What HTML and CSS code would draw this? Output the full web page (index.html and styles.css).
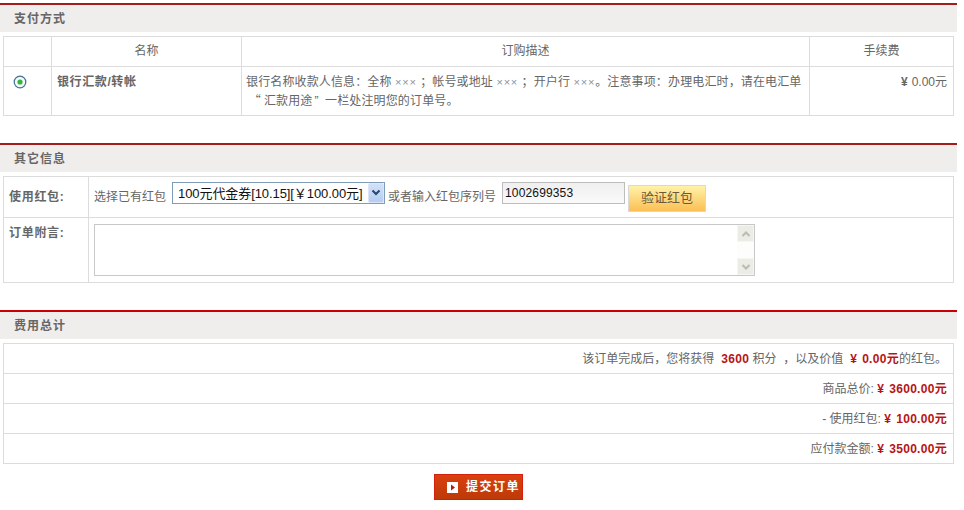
FILE: index.html
```html
<!DOCTYPE html>
<html lang="zh-CN">
<head>
<meta charset="utf-8">
<title>订单结算</title>
<link rel="stylesheet" href="styles.css">
</head>
<body>
<main class="page">
  <section class="block">
    <h2 class="bar bar-dark">支付方式</h2>
    <table class="grid pay">
      <colgroup><col class="c-radio"><col class="c-name"><col class="c-desc"><col class="c-fee"></colgroup>
      <thead>
        <tr><th></th><th>名称</th><th>订购描述</th><th>手续费</th></tr>
      </thead>
      <tbody>
        <tr>
          <td class="radio-cell">
            <svg class="radio" width="14" height="14" viewBox="0 0 14 14"><circle cx="7" cy="7" r="5.800" fill="#f4f7fb" stroke="#3f6f94" stroke-width="1.200"/><circle cx="7" cy="7" r="2.600" fill="#35b53a"/></svg>
          </td>
          <td class="pay-name">银行汇款/转帐</td>
          <td class="pay-desc">银行名称收款人信息：全称 <span class="x">×××</span> ；帐号或地址 <span class="x">×××</span> ；开户行 <span class="x">×××</span>。注意事项：办理电汇时，请在电汇单<br><span class="cjk quote-start">&nbsp;“</span>汇款用途<span class="quote-end">”</span> 一栏处注明您的订单号。</td>
          <td class="pay-fee"><b class="yen">¥</b>0.00元</td>
        </tr>
      </tbody>
    </table>
  </section>

  <section class="block">
    <h2 class="bar bar-dark">其它信息</h2>
    <table class="grid info">
      <colgroup><col class="c-label"><col></colgroup>
      <tbody>
        <tr class="row-bonus">
          <th class="label">使用红包:</th>
          <td>
            <div class="bonus">
              <span>选择已有红包</span>
              <div class="select">
                <span class="select-text">100元代金券[10.15][￥100.00元]</span>
                <span class="select-arrow">
                  <svg width="10" height="8" viewBox="0 0 10 8"><path d="M1.500 1.500 5 5l3.500-3.500" fill="none" stroke="#24466f" stroke-width="2"/></svg>
                </span>
              </div>
              <span class="or">或者输入红包序列号</span>
              <input class="serial" type="text" value="1002699353">
              <button class="verify" type="button">验证红包</button>
            </div>
          </td>
        </tr>
        <tr class="row-note">
          <th class="label">订单附言:</th>
          <td>
            <div class="note">
              <textarea class="note-input"></textarea>
              <div class="scroll">
                <span class="scroll-btn"><svg width="10" height="8" viewBox="0 0 10 8"><path d="M1.500 6 5 2.500 8.500 6" fill="none" stroke="#b9bcb4" stroke-width="2"/></svg></span>
                <span class="scroll-btn"><svg width="10" height="8" viewBox="0 0 10 8"><path d="M1.500 2 5 5.500 8.500 2" fill="none" stroke="#b9bcb4" stroke-width="2"/></svg></span>
              </div>
            </div>
          </td>
        </tr>
      </tbody>
    </table>
  </section>

  <section class="block">
    <h2 class="bar bar-red">费用总计</h2>
    <table class="grid total">
      <tbody>
        <tr><td>该订单完成后<span class="cjk">，</span>您将获得 <b class="price">&nbsp;3600</b> 积分 &nbsp;，以及价值 <b class="price">&nbsp;<span class="yen">¥</span>0.00元</b>的红包。</td></tr>
        <tr><td>商品总价: <b class="price"><span class="yen">¥</span>3600.00元</b></td></tr>
        <tr><td>- 使用红包: <b class="price"><span class="yen">¥</span>100.00元</b></td></tr>
        <tr><td>应付款金额: <b class="price"><span class="yen">¥</span>3500.00元</b></td></tr>
      </tbody>
    </table>
  </section>

  <div class="actions">
    <button class="submit" type="button">
      <svg width="11" height="11" viewBox="0 0 11 11"><rect width="11" height="11" fill="#fff"/><path d="M4 2.500 8 5.500 4 8.500Z" fill="#b01c10"/></svg>
      <span>提交订单</span>
    </button>
  </div>
</main>
</body>
</html>
```
FILE: styles.css
```css
* { box-sizing: border-box; }
html, body { margin: 0; background: #fff; }
body {
  font: 12px/18px "Liberation Sans", "Noto Sans CJK SC", sans-serif;
  color: #666;
}
.page { width: 957px; padding-top: 3px; }
.block { margin-bottom: 27px; }
.block:last-of-type { margin-bottom: 0; }
.cjk { font-family: "Noto Sans CJK SC", sans-serif; }
.quote-start { margin-right: 3px; }
.quote-end { margin: 0 3px 0 2px; }

.bar {
  height: 29px;
  margin: 0;
  padding-left: 14px;
  font-size: 12px;
  line-height: 28px;
  font-weight: 700;
  letter-spacing: 1px;
  color: #666;
  background: #f0eded;
}
.bar-dark { border-top: 2px solid #a31d1d; }
.bar-red { border-top: 2px solid #cc0000; }

.grid {
  width: 951px;
  margin: 4px 0 0 3px;
  border-collapse: collapse;
  table-layout: fixed;
}
.grid th, .grid td { border: 1px solid #dcdcdc; }

.c-radio { width: 48px; }
.c-name { width: 190px; }
.c-fee { width: 144px; }
.pay thead th { height: 30px; font-weight: 400; text-align: center; padding: 0 0 2px; }
.pay tbody td { height: 49px; padding: 6px 6px 0; vertical-align: top; }
.pay .radio-cell { padding: 8px 0 0 9px; }
.radio { display: block; }
.pay .pay-name { padding-left: 5px; font-weight: 700; letter-spacing: .6px; }
.pay .pay-desc { padding-left: 4px; padding-right: 0; letter-spacing: .13px; }
.x { color: #8a93a0; font-size: 11px; letter-spacing: .8px; }
.pay .pay-fee { text-align: right; }
.yen { margin-right: 5px; font-weight: 700; }
.pay-fee .yen { margin-right: 4px; }

.c-label { width: 85px; }
.info .label { padding: 0 0 0 5px; font-weight: 700; text-align: left; letter-spacing: .7px; }
.row-bonus th, .row-bonus td { height: 41px; }
.row-bonus td { padding: 0 0 0 5px; vertical-align: top; }
.bonus { display: flex; align-items: flex-start; }
.bonus > span:first-child, .or { margin-top: 11px; }
.select {
  display: flex;
  width: 213px;
  height: 22px;
  margin: 5px 3px 0 6px;
  border: 1px solid #7f9db9;
  background: #fff;
  color: #111;
}
.select-text { flex: 1; padding-left: 5px; font-size: 13px; line-height: 21px; letter-spacing: -.08px; white-space: nowrap; }
.select-arrow {
  display: flex;
  align-items: center;
  justify-content: center;
  width: 16px;
  border: 1px solid #dce6f8;
  border-radius: 2px;
  background: linear-gradient(#d3e1f8, #b5cdf2);
}
.serial {
  width: 123px;
  height: 22px;
  margin: 5px 3px 0 6px;
  padding: 0 0 1px 2px;
  border: 1px solid #bdbdbd;
  background: linear-gradient(#efefef, #fafafa);
  font: 12px "Liberation Sans", sans-serif;
  letter-spacing: .15px;
  color: #111;
}
.verify {
  width: 78px;
  height: 27px;
  margin-top: 8px;
  padding: 0 0 5px;
  border: 1px solid #d8d8d8;
  background: linear-gradient(#fff2a8, #fbc054);
  font: 13px "Liberation Sans", "Noto Sans CJK SC", sans-serif;
  color: #6b5a3a;
}
.row-note th, .row-note td { height: 65px; vertical-align: top; }
.info .row-note .label { padding-top: 6px; }
.row-note td { padding: 6px 0 0 5px; }
.note {
  display: flex;
  width: 661px;
  height: 52px;
  border: 1px solid #c8c8c8;
  background: #fff;
}
.note-input { flex: 1; border: 0; resize: none; outline: 0; background: transparent; }
.scroll {
  display: flex;
  flex-direction: column;
  justify-content: space-between;
  width: 17px;
  background: #fdfdfb;
}
.scroll-btn {
  display: flex;
  align-items: center;
  justify-content: center;
  height: 17px;
  background: #ecece6;
  border: 1px solid #f5f5f1;
}

.total td { height: 30px; padding: 0 6px 0 0; text-align: right; }
.price { color: #b81414; letter-spacing: .3px; }

.actions { display: flex; justify-content: center; margin-top: 10px; }
.submit {
  display: flex;
  align-items: center;
  gap: 8px;
  width: 89px;
  height: 26px;
  padding: 0 0 0 12px;
  border: 1px solid #d5210c;
  background: linear-gradient(#d9400f, #bd3a08);
  color: #fff;
  font: 700 12px "Liberation Sans", "Noto Sans CJK SC", sans-serif;
  letter-spacing: 1.500px;
}
.submit span { margin-bottom: 3px; }
```
